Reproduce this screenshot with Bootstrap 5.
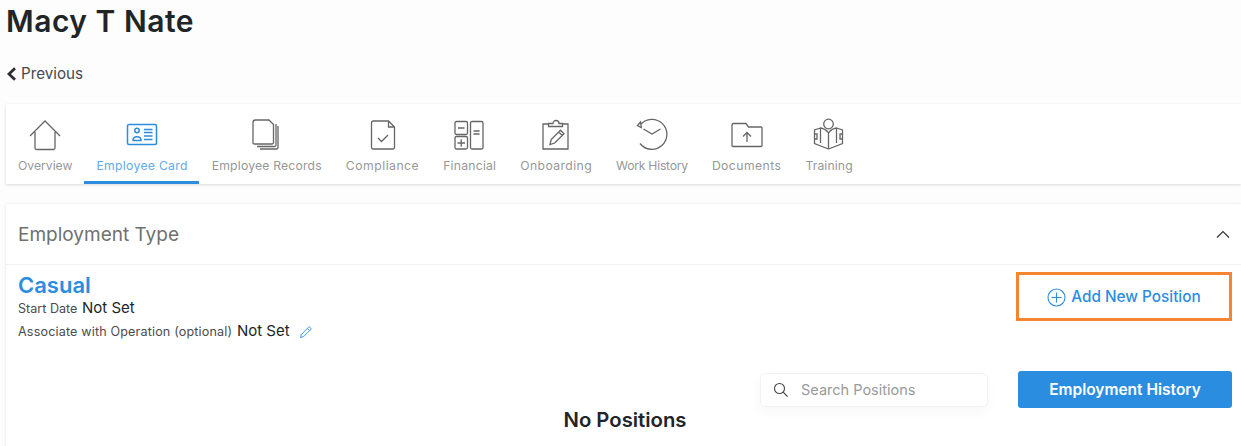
<!DOCTYPE html>
<html lang="en">
<head>
<meta charset="utf-8">
<title>Macy T Nate</title>
<link href="https://cdn.jsdelivr.net/npm/bootstrap@5.3.0/dist/css/bootstrap.min.css" rel="stylesheet">
<style>
html,body{height:446px;overflow:hidden}
body{background:#fdfdfd;font-family:Inter,"Liberation Sans",sans-serif;color:#212529;padding:0 0 0 6px}
.page-title{font-size:30px;font-weight:600;line-height:40px;margin:1px 0 0;padding:0;letter-spacing:.5px}
.prev-link{display:flex;align-items:center;gap:4px;margin-top:21px;height:24px;font-size:15.2px;color:#454a4f;text-decoration:none}
.tab-card{background:#fff;box-shadow:0 1px 3px rgba(0,0,0,.14);margin-top:18px;height:80px}
.tab-item{display:flex;flex-direction:column;align-items:center;height:80px;padding:0 12px;color:#979797;font-size:12.2px;text-decoration:none;border-bottom:3px solid transparent;white-space:nowrap}
.tab-item svg{margin-top:14px;height:34px;width:40px;flex:none}
.tab-label{margin-top:4px;line-height:20px}
.tab-item.is-on{color:#64a9e9;border-bottom-color:#2b8de0}
.tab-item:nth-child(2){padding-right:11px}
.tab-item:nth-child(3){padding-left:13px}
.tab-item:nth-child(2) .tab-label{letter-spacing:.3px}
.tab-item:nth-child(3) .tab-label{letter-spacing:.19px}
.tab-item:nth-child(4) .tab-label{letter-spacing:.5px}
.tab-item:nth-child(5) .tab-label{letter-spacing:.22px}
.tab-item:nth-child(6) .tab-label{letter-spacing:.4px}
.tab-item:nth-child(7) .tab-label{letter-spacing:-.25px}
.tab-item:nth-child(8) .tab-label{letter-spacing:.44px}
.tab-item:nth-child(9) .tab-label{letter-spacing:.12px}
.sect-card{background:#fff;box-shadow:0 0 3px rgba(0,0,0,.1);margin-top:20px;height:260px}
.sect-head{height:61px;padding:3px 11px 0 12px;border-bottom:1px solid #f1f1f1;font-size:19px;color:#707070}
.sect-head svg{margin-top:-3px}
.type-name{font-size:22px;font-weight:600;color:#2b8de0;line-height:25px;margin:0;padding-top:1px}
.meta-row{font-size:12.6px;color:#4c4c4c;line-height:22px;white-space:nowrap;margin-top:-1px}
.meta-row + .meta-row{margin-top:0}
.meta-row.is-long{letter-spacing:.15px}
.meta-row b{font-weight:400;font-size:15px;color:#212529;margin-left:1px;letter-spacing:0}
.pencil-mark{margin-left:6px}
.sect-body{padding:7px 9px 0 12px}
.add-box{width:216px;height:49px;border:3px solid #f58531;background:#fff;color:#2b8de0;font-weight:500;font-size:15.3px;gap:5px;padding:1px 0 0}
.tool-row{margin-top:28px}
.search-box{width:228px;height:34px;margin-top:2px;border:1px solid #f0f2f4;border-radius:5px;box-shadow:0 5px 12px rgba(0,0,0,.03);padding-left:12px;gap:12px;color:#9a9a9a;font-size:14.5px;background:#fff}
.hist-btn{width:214px;height:37px;background:#2b8de0;border:0;border-radius:3px;color:#fff;font-weight:600;font-size:15.5px;margin-left:30px;padding:0}
.none-title{font-size:20.3px;font-weight:600;margin:-2px 0 0;line-height:28px}
</style>
</head>
<body>
<h1 class="page-title">Macy T Nate</h1>
<a class="prev-link" href="#"><svg width="11" height="14" viewBox="0 0 11 14"><path d="M9 1.300 3 7l6 5.700" fill="none" stroke="#2b2f33" stroke-width="2.800"/></svg>Previous</a>

<nav class="tab-card d-flex">
  <a class="tab-item" href="#"><svg viewBox="0 0 40 34" fill="none" stroke="#666" stroke-width="1.300"><path d="M5 18 20 3l15 15M10 14v16a1.500 1.500 0 0 0 1.500 1.500h17A1.500 1.500 0 0 0 30 30V14"/></svg><span class="tab-label">Overview</span></a>
  <a class="tab-item is-on" href="#"><svg viewBox="0 0 40 34" fill="none" stroke="#2b8de0" stroke-width="1.500"><rect x="5.500" y="6.500" width="29" height="20" rx="1.500"/><circle cx="15" cy="12.500" r="2.200"/><path d="M11 22.500c0-5 8-5 8 0zM22 11.500h8.500M22 14.500h8.500M22 18h8.500M22 21.500h8.500"/></svg><span class="tab-label">Employee Card</span></a>
  <a class="tab-item" href="#"><svg viewBox="0 0 40 34" fill="none" stroke="#666" stroke-width="1.300"><path d="M13 31h16.500a1.500 1.500 0 0 0 1.500-1.500V8M10 28.500h17.500a1.500 1.500 0 0 0 1.500-1.500V6M6 4.500a2.500 2.500 0 0 1 2.500-2.500h13.500l4.500 4.500v18a1.500 1.500 0 0 1-1.500 1.500H7.500A1.500 1.500 0 0 1 6 25z"/></svg><span class="tab-label">Employee Records</span></a>
  <a class="tab-item" href="#"><svg viewBox="0 0 40 34" fill="none" stroke="#666" stroke-width="1.300"><path d="M8.500 5a2 2 0 0 1 2-2h15l6 6v20.500a1.500 1.500 0 0 1-1.500 1.500H10a1.500 1.500 0 0 1-1.500-1.500zM25.500 3v6h6M15 20l3.500 3.500L25 17"/></svg><span class="tab-label">Compliance</span></a>
  <a class="tab-item" href="#"><svg viewBox="0 0 40 34" fill="none" stroke="#666" stroke-width="1.300"><rect x="5" y="3.500" width="12.500" height="13" rx="1.500"/><rect x="5" y="18.500" width="12.500" height="12.500" rx="1.500"/><rect x="20.500" y="3.500" width="12.500" height="27.500" rx="1.500"/><path d="M8 10h6.500M7.500 25h7.500M11.200 21.300v7.500M23.500 13h6M23.500 16h6"/></svg><span class="tab-label">Financial</span></a>
  <a class="tab-item" href="#"><svg viewBox="0 0 40 34" fill="none" stroke="#666" stroke-width="1.300"><path d="M12.500 6H7v25h25V6h-5.500M12.500 8.500V5.500h4.500a3 3 0 0 1 6 0h3.500v3zM14 26.500l1.200-5 9.300-9.300 3.500 3.500-9.300 9.300zM22.700 14l3.500 3.500"/></svg><span class="tab-label">Onboarding</span></a>
  <a class="tab-item" href="#"><svg viewBox="0 0 40 34" fill="none" stroke="#666" stroke-width="1.300"><path d="M8.500 6.500A15 15 0 1 1 8 25.500M5.500 7.500l3-3.500 .8 5.500zM11.500 11l8.500 5 8.500-5"/></svg><span class="tab-label">Work History</span></a>
  <a class="tab-item" href="#"><svg viewBox="0 0 40 34" fill="none" stroke="#666" stroke-width="1.300"><path d="M5 7a1.500 1.500 0 0 1 1.500-1.500h12.500L21.500 9H34a1 1 0 0 1 1 1v17.500a1 1 0 0 1-1 1H6a1 1 0 0 1-1-1zM20 24V14.500M16 18.500l4-4 4 4"/></svg><span class="tab-label">Documents</span></a>
  <a class="tab-item" href="#"><svg viewBox="0 0 40 34" fill="none" stroke="#666" stroke-width="1.300"><circle cx="19.500" cy="6" r="4.800"/><path d="M19.500 31 5.500 25.500V12l6-2M19.500 31l14-5.500V12l-6-2M19.500 31V15c-2-3-5-4.500-8-5v15M19.500 15c2-3 5-4.500 8-5v15M5.500 16h2.500v5H5.500M33.500 16H31v5h2.500"/></svg><span class="tab-label">Training</span></a>
</nav>

<section class="sect-card">
  <div class="sect-head d-flex align-items-center justify-content-between">
    <span>Employment Type</span>
    <svg width="14" height="8" viewBox="0 0 14 8"><path d="M1 7.500 7 1.500l6 6" fill="none" stroke="#333" stroke-width="1.200"/></svg>
  </div>
  <div class="sect-body">
    <div class="d-flex justify-content-between align-items-start">
      <div>
        <h2 class="type-name">Casual</h2>
        <div class="meta-row">Start Date <b>Not Set</b></div>
        <div class="meta-row is-long">Associate with Operation (optional) <b>Not Set</b>
          <svg class="pencil-mark" width="13" height="13" viewBox="0 0 13 13" fill="none" stroke="#3f97e4" stroke-width="1"><path d="M1.500 11.500l.8-3L9.500 1.300a1 1 0 0 1 1.500 0l.7.7a1 1 0 0 1 0 1.500L4.500 10.700zM8.500 2.300l2.200 2.200"/></svg>
        </div>
      </div>
      <button class="add-box d-flex align-items-center justify-content-center" type="button"><svg width="19" height="19" viewBox="0 0 19 19" fill="none" stroke="#2b8de0" stroke-width="1.100"><circle cx="9.500" cy="9.500" r="8.500"/><path d="M9.500 4.500v10M4.500 9.500h10"/></svg>Add New Position</button>
    </div>
    <div class="tool-row d-flex justify-content-end">
      <div class="search-box d-flex align-items-center"><svg width="16" height="16" viewBox="0 0 16 16" fill="none" stroke="#444" stroke-width="1.100"><circle cx="6.500" cy="6.500" r="5"/><path d="m10.200 10.200 4.300 4.300"/></svg><span>Search Positions</span></div>
      <button class="hist-btn" type="button">Employment History</button>
    </div>
    <p class="none-title text-center">No Positions</p>
  </div>
</section>
</body>
</html>
